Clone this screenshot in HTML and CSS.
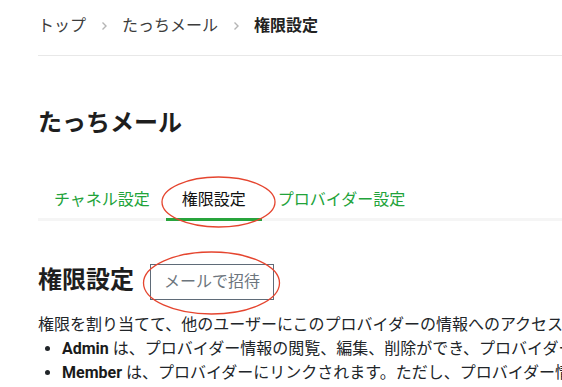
FILE: index.html
```html
<!DOCTYPE html>
<html lang="ja">
<head>
<meta charset="utf-8">
<title>権限設定</title>
<link rel="stylesheet" href="styles.css">
</head>
<body>
<div class="page">
  <nav class="breadcrumb">
    <a class="crumb" href="#">トップ</a>
    <span class="sep"><svg width="7" height="10" viewBox="0 0 7 10"><path d="M1.5 1.5 L5 5 L1.5 8.5" fill="none" stroke="#b5b5b5" stroke-width="1.4"/></svg></span>
    <a class="crumb" href="#">たっちメール</a>
    <span class="sep"><svg width="7" height="10" viewBox="0 0 7 10"><path d="M1.5 1.5 L5 5 L1.5 8.5" fill="none" stroke="#b5b5b5" stroke-width="1.4"/></svg></span>
    <span class="crumb current">権限設定</span>
  </nav>

  <h1 class="title">たっちメール</h1>

  <div class="tabs">
    <a class="tab" href="#">チャネル設定</a>
    <a class="tab active" href="#">権限設定</a>
    <a class="tab" href="#">プロバイダー設定</a>
  </div>

  <div class="section-head">
    <h2 class="section-title">権限設定</h2>
    <button class="invite">メールで招待</button>
  </div>

  <p class="desc">権限を割り当てて、他のユーザーにこのプロバイダーの情報へのアクセスを許可します。</p>
  <ul class="roles">
    <li><strong>Admin</strong> は、プロバイダー情報の閲覧、編集、削除ができ、プロバイダーにユーザーを招待できます。</li>
    <li><strong>Member</strong> は、プロバイダーにリンクされます。ただし、プロバイダー情報は閲覧のみ可能です。</li>
  </ul>

  <svg class="annotations" width="562" height="387" viewBox="0 0 562 387">
    <ellipse cx="218.5" cy="202" rx="56.5" ry="25" fill="none" stroke="#e5452f" stroke-width="1.3"/>
    <ellipse cx="211.5" cy="283" rx="68" ry="31" fill="none" stroke="#e5452f" stroke-width="1.3"/>
  </svg>
</div>
</body>
</html>
```

FILE: styles.css
```css
html, body {
  margin: 0;
  padding: 0;
  overflow: hidden;
  background: #ffffff;
}

body {
  font-family: Roboto, "Noto Sans CJK JP", sans-serif;
  color: #212529;
  font-size: 16px;
}

.page {
  position: relative;
  padding-left: 38px;
  width: 900px;
  height: 387px;
}

.breadcrumb {
  display: flex;
  align-items: center;
  padding-top: 14px;
  padding-bottom: 17px;
  line-height: 24px;
  border-bottom: 1px solid #e8e8e8;
}

.crumb {
  color: #3c3c3c;
  text-decoration: none;
}

.crumb.current {
  color: #222;
  font-weight: bold;
}

.sep {
  display: flex;
  align-items: center;
  margin: 0 14px 0 15px;
}

.title {
  margin: 51px 0 0;
  font-size: 24px;
  line-height: 32px;
  font-weight: bold;
  color: #1e1e1e;
}

.tabs {
  display: flex;
  margin-top: 41px;
  border-bottom: 3px solid #f5f5f5;
}

.tab {
  padding: 8px 16px 6px;
  line-height: 24px;
  color: #22a33a;
  text-decoration: none;
  margin-bottom: -3px;
  border-bottom: 3px solid transparent;
}

.tab.active {
  color: #111;
  border-bottom-color: #28a43c;
}

.section-head {
  display: flex;
  align-items: center;
  gap: 16px;
  margin-top: 43px;
}

.section-title {
  margin: 0;
  font-size: 24px;
  line-height: 32px;
  font-weight: bold;
  color: #1e1e1e;
  position: relative;
  top: -2px;
}

.invite {
  font-family: inherit;
  font-size: 16px;
  line-height: 24px;
  padding: 5px 13px;
  background: #fff;
  color: #6c757d;
  border: 1px solid #5f6b78;
  border-radius: 0;
}

.desc {
  margin: 13px 0 0;
  line-height: 24px;
  white-space: nowrap;
}

.roles {
  margin: 0;
  padding-left: 24px;
  line-height: 24px;
  white-space: nowrap;
}

.roles strong {
  font-weight: bold;
  color: #1a1a1a;
}

.annotations {
  position: absolute;
  left: 0;
  top: 0;
  pointer-events: none;
}
```
